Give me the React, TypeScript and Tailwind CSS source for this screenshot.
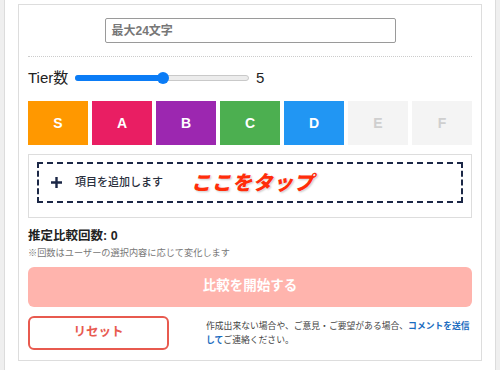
import React from 'react'

const font = {
  fontFamily: '"Liberation Sans", "Noto Sans CJK JP", sans-serif',
}

const tiers = [
  { label: 'S', className: 'bg-[#ff9800] text-white' },
  { label: 'A', className: 'bg-[#e91e63] text-white' },
  { label: 'B', className: 'bg-[#9c27b0] text-white' },
  { label: 'C', className: 'bg-[#4caf50] text-white' },
  { label: 'D', className: 'bg-[#2196f3] text-white' },
  { label: 'E', className: 'bg-[#f4f4f4] text-[#cfcfcf]' },
  { label: 'F', className: 'bg-[#f4f4f4] text-[#cfcfcf]' },
]

function TierSlider() {
  return (
    <div className="relative h-[12px] w-[174px]">
      <div className="absolute left-0 right-0 top-[3px] h-[6px] rounded-full border border-[#c9c9c9] bg-[#ececec]" />
      <div className="absolute left-0 top-[3px] h-[6px] w-[88px] rounded-full bg-[#0b7cf6]" />
      <div className="absolute left-[82px] top-0 h-[12px] w-[12px] rounded-full bg-[#0b7cf6]" />
    </div>
  )
}

export default function App() {
  return (
    <div style={font} className="h-[370px] w-[500px] overflow-hidden bg-[#efefef] px-[4px]">
      <div className="h-full border-x border-[#dcdcdc] bg-white px-[13px] pt-[4px]">
        <div className="border border-[#dddddd] px-[9px] pb-[10px] pt-[13px]">
          <div className="flex justify-center">
            <div className="flex h-[25px] w-[291px] items-center rounded-[2px] border-[1.5px] border-[#9a9a9a] px-[6px] text-[12px] font-semibold text-[#777]">
              最大24文字
            </div>
          </div>

          <div className="mt-[13px] border-t border-dotted border-[#cccccc]" />

          <div className="mt-[11px] flex h-[20px] items-center text-[15px] text-[#222]">
            <span className="w-[47px]">Tier数</span>
            <TierSlider />
            <span className="ml-[7px] font-medium">5</span>
          </div>

          <div className="mt-[13px] grid grid-cols-7 gap-[4px]">
            {tiers.map((t) => (
              <div
                key={t.label}
                className={`flex h-[44px] items-center justify-center text-[14px] font-bold ${t.className}`}
              >
                {t.label}
              </div>
            ))}
          </div>

          <div className="mt-[9px] border border-[#dddddd] px-[8px] pb-[14px] pt-[7px]">
            <div className="flex h-[41px] items-center border-2 border-dashed border-[#1b2746] pl-[11px]">
              <svg width="13" height="13" viewBox="0 0 13 13" className="shrink-0">
                <path d="M6.5 1v11M1 6.5h11" stroke="#1b2746" strokeWidth="2.4" />
              </svg>
              <span className="ml-[12px] text-[11px] font-medium text-[#2a2f3d]">
                項目を追加します
              </span>
              <span
                className="ml-[28px] text-[20px] font-black italic tracking-[0.5px] text-[#ff2d0a]"
                style={{ textShadow: '0 0 2px #fff, 1px 1px 2px rgba(0,0,0,0.25)' }}
              >
                ここをタップ
              </span>
            </div>
          </div>

          <div className="mt-[9px] text-[12.5px] font-semibold text-[#222]">推定比較回数: 0</div>
          <div className="mt-[1px] text-[9.2px] text-[#777]">
            ※回数はユーザーの選択内容に応じて変化します
          </div>

          <div className="mt-[6px] flex h-[40px] items-center justify-center rounded-[6px] bg-[#ffb4ad] text-[13.5px] font-bold text-white">
            比較を開始する
          </div>

          <div className="mt-[9px] flex items-center justify-between">
            <div className="flex h-[34px] w-[141px] items-center justify-center rounded-[6px] border-2 border-[#e85a4f] text-[12.5px] font-bold text-[#e85a4f]">
              リセット
            </div>
            <div className="w-[266px] text-[8.8px] leading-[14px] text-[#444]">
              <div>
                作成出来ない場合や、ご意見・ご要望がある場合、
                <span className="font-bold text-[#1a6cc0]">コメントを送信</span>
              </div>
              <div>
                <span className="font-bold text-[#1a6cc0]">して</span>
                ご連絡ください。
              </div>
            </div>
          </div>
        </div>
      </div>
    </div>
  )
}
